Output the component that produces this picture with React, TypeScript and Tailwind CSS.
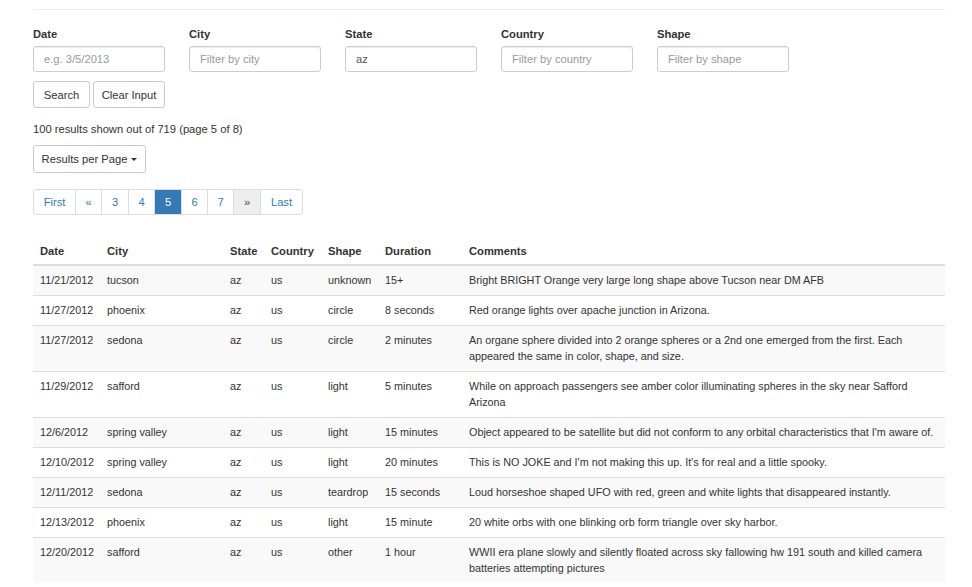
import { useState } from 'react';

interface Sighting {
  date: string;
  city: string;
  state: string;
  country: string;
  shape: string;
  duration: string;
  comments: string;
}

const sightings: Sighting[] = [
  { date: '11/21/2012', city: 'tucson', state: 'az', country: 'us', shape: 'unknown', duration: '15+', comments: 'Bright BRIGHT Orange very large long shape above Tucson near DM AFB' },
  { date: '11/27/2012', city: 'phoenix', state: 'az', country: 'us', shape: 'circle', duration: '8 seconds', comments: 'Red orange lights over apache junction in Arizona.' },
  { date: '11/27/2012', city: 'sedona', state: 'az', country: 'us', shape: 'circle', duration: '2 minutes', comments: 'An organe sphere divided into 2 orange spheres or a 2nd one emerged from the first. Each appeared the same in color, shape, and size.' },
  { date: '11/29/2012', city: 'safford', state: 'az', country: 'us', shape: 'light', duration: '5 minutes', comments: 'While on approach passengers see amber color illuminating spheres in the sky near Safford Arizona' },
  { date: '12/6/2012', city: 'spring valley', state: 'az', country: 'us', shape: 'light', duration: '15 minutes', comments: "Object appeared to be satellite but did not conform to any orbital characteristics that I'm aware of." },
  { date: '12/10/2012', city: 'spring valley', state: 'az', country: 'us', shape: 'light', duration: '20 minutes', comments: "This is NO JOKE and I'm not making this up. It's for real and a little spooky." },
  { date: '12/11/2012', city: 'sedona', state: 'az', country: 'us', shape: 'teardrop', duration: '15 seconds', comments: 'Loud horseshoe shaped UFO with red, green and white lights that disappeared instantly.' },
  { date: '12/13/2012', city: 'phoenix', state: 'az', country: 'us', shape: 'light', duration: '15 minute', comments: '20 white orbs with one blinking orb form triangle over sky harbor.' },
  { date: '12/20/2012', city: 'safford', state: 'az', country: 'us', shape: 'other', duration: '1 hour', comments: 'WWII era plane slowly and silently floated across sky fallowing hw 191 south and killed camera batteries attempting pictures' },
];

const filters = [
  { label: 'Date', placeholder: 'e.g. 3/5/2013', value: '' },
  { label: 'City', placeholder: 'Filter by city', value: '' },
  { label: 'State', placeholder: 'Filter by state', value: 'az' },
  { label: 'Country', placeholder: 'Filter by country', value: '' },
  { label: 'Shape', placeholder: 'Filter by shape', value: '' },
];

// widths include the 1px overlap of the shared border
const pages = [
  { label: 'First', w: 'w-[43px]' },
  { label: '«', w: 'w-[27px]' },
  { label: '3', w: 'w-[28px]' },
  { label: '4', w: 'w-[27px]' },
  { label: '5', w: 'w-[28px]' },
  { label: '6', w: 'w-[27px]' },
  { label: '7', w: 'w-[27px]' },
  { label: '»', w: 'w-[28px]' },
  { label: 'Last', w: 'w-[43px]' },
];

const th = 'px-[7px] pt-[8px] pb-[5px] border-b-2 border-[#ddd] font-bold';
const td = 'px-[7px] pt-[6px] pb-[7px] border-t border-[#ddd]';

export default function App() {
  const [values, setValues] = useState(filters.map((f) => f.value));

  return (
    <div className="min-h-[587px] bg-white font-['Liberation_Sans',Arial,sans-serif] text-[11.2px] leading-[16px] text-[#333]">
      <div className="mx-[33px] pt-[9px] w-[912px]">
        <div className="border-t border-[#eee]" />

        <div className="flex gap-[24px] mt-[16px]">
          {filters.map((f, i) => (
            <div key={f.label} className="flex flex-col w-[132px]">
              <label className="font-bold mb-[4px]">{f.label}</label>
              <input
                value={values[i]}
                placeholder={f.placeholder}
                onChange={(e) => {
                  const next = [...values];
                  next[i] = e.target.value;
                  setValues(next);
                }}
                className="h-[26px] px-[10px] border border-[#ccc] rounded-[3px] text-[11.2px] text-[#555] placeholder:text-[#999] shadow-[inset_0_1px_1px_rgba(0,0,0,0.075)] outline-none"
              />
            </div>
          ))}
        </div>

        <div className="flex gap-[3px] mt-[9px]">
          <button className="h-[27px] w-[57px] border border-[#ccc] rounded-[3px] bg-white">Search</button>
          <button className="h-[27px] w-[72px] border border-[#ccc] rounded-[3px] bg-white">Clear Input</button>
        </div>

        <p className="mt-[13px]">100 results shown out of 719 (page 5 of 8)</p>

        <button className="mt-[8px] h-[28px] w-[113px] border border-[#ccc] rounded-[3px] bg-white flex items-center justify-center gap-[4px]">
          Results per Page
          <span className="inline-block w-0 h-0 border-x-[3px] border-x-transparent border-t-[3px] border-t-[#333]" />
        </button>

        <div className="mt-[16px] flex h-[26px] w-fit">
          {pages.map((p) => {
            const active = p.label === '5';
            const hover = p.label === '»';
            return (
              <a
                key={p.label}
                className={`flex items-center justify-center border border-[#ddd] -ml-px first:ml-0 first:rounded-l-[3px] last:rounded-r-[3px] ${p.w} ${
                  active
                    ? 'bg-[#337ab7] border-[#337ab7] text-white relative z-10'
                    : hover
                      ? 'bg-[#eee] text-[#23527c]'
                      : 'bg-white text-[#337ab7]'
                }`}
              >
                {p.label}
              </a>
            );
          })}
        </div>

        <table className="mt-[20px] w-[912px] table-fixed border-collapse">
          <thead>
            <tr className="text-left">
              <th className={`w-[67px] ${th}`}>Date</th>
              <th className={`w-[123px] ${th}`}>City</th>
              <th className={`w-[41px] ${th}`}>State</th>
              <th className={`w-[57px] ${th}`}>Country</th>
              <th className={`w-[57px] ${th}`}>Shape</th>
              <th className={`w-[84px] ${th}`}>Duration</th>
              <th className={th}>Comments</th>
            </tr>
          </thead>
          <tbody className="text-[10.8px]">
            {sightings.map((s, i) => (
              <tr key={i} className={`align-top ${i % 2 === 0 ? 'bg-[#f9f9f9]' : 'bg-white'}`}>
                <td className={td}>{s.date}</td>
                <td className={td}>{s.city}</td>
                <td className={td}>{s.state}</td>
                <td className={td}>{s.country}</td>
                <td className={td}>{s.shape}</td>
                <td className={td}>{s.duration}</td>
                <td className={td}>{s.comments}</td>
              </tr>
            ))}
          </tbody>
        </table>
      </div>
    </div>
  );
}
